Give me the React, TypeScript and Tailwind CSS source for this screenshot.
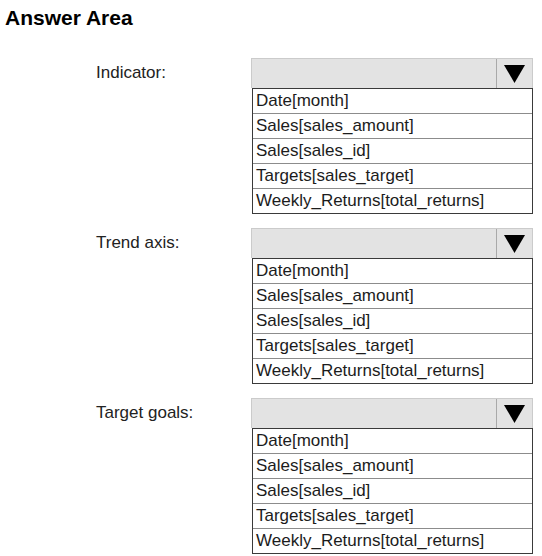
const options = [
  "Date[month]",
  "Sales[sales_amount]",
  "Sales[sales_id]",
  "Targets[sales_target]",
  "Weekly_Returns[total_returns]",
];

const sections = ["Indicator:", "Trend axis:", "Target goals:"];

function Dropdown() {
  return (
    <div className="w-[282px]">
      {/* closed select header */}
      <div className="flex h-[30px] border border-b-0 border-[#cbcbcb] bg-[#e3e3e3]">
        <div className="flex-1" />
        <div className="flex w-[36px] items-center justify-center border-l border-[#a9a9a9]">
          <svg width="21" height="18" viewBox="0 0 21 18">
            <polygon points="0,0 21,0 10.5,18" fill="#000" />
          </svg>
        </div>
      </div>

      {/* option list */}
      <div className="ml-[1px] border border-[#3a3a3a] bg-white">
        {options.map((o, i) => (
          <div
            key={o}
            className={
              i > 0
                ? "h-[25px] border-t border-[#8c8c8c] pl-[3px] text-[17px] leading-[24px] text-[#1c1c1c]"
                : "h-[24px] pl-[3px] text-[17px] leading-[24px] text-[#1c1c1c]"
            }
          >
            {o}
          </div>
        ))}
      </div>
    </div>
  );
}

export default function App() {
  return (
    <div className="h-[556px] w-[542px] bg-white font-['Liberation_Sans',Arial,sans-serif]">
      <h1 className="pl-[5px] pt-[6px] text-[21px] font-bold leading-[24px] text-black">
        Answer Area
      </h1>

      <div className="mt-[28px] flex flex-col gap-[14px]">
        {sections.map((label) => (
          <div key={label} className="flex">
            <div className="w-[251px] pl-[96px]">
              <div className="flex h-[30px] items-center text-[17px] text-[#222]">
                {label}
              </div>
            </div>
            <Dropdown />
          </div>
        ))}
      </div>
    </div>
  );
}
